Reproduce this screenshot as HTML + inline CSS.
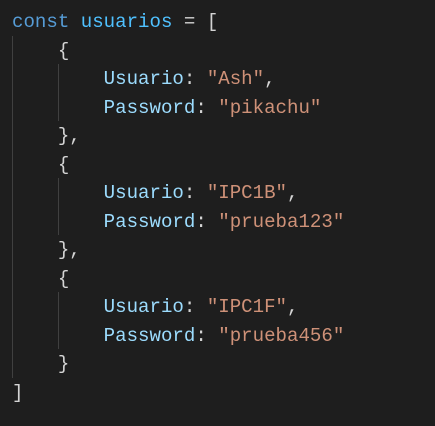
<!DOCTYPE html>
<html><head><meta charset="utf-8"><style>
html,body{margin:0;padding:0;background:#1e1e1e;width:435px;height:426px;overflow:hidden}
pre{position:absolute;left:12px;top:8px;margin:0;font-family:"Liberation Mono",monospace;font-size:19.1px;line-height:28.5px;color:#d4d4d4}
.k{color:#569cd6}.v{color:#4fc1ff}.p{color:#9cdcfe}.s{color:#ce9178}
.g{position:absolute;width:1px;background:#404040}
</style></head><body>
<div class="g" style="left:12px;top:36px;height:342px"></div>
<div class="g" style="left:58px;top:64px;height:57px"></div>
<div class="g" style="left:58px;top:178px;height:57px"></div>
<div class="g" style="left:58px;top:292px;height:57px"></div>
<pre><span class="k">const</span> <span class="v">usuarios</span> = [
    {
        <span class="p">Usuario</span>: <span class="s">"Ash"</span>,
        <span class="p">Password</span>: <span class="s">"pikachu"</span>
    },
    {
        <span class="p">Usuario</span>: <span class="s">"IPC1B"</span>,
        <span class="p">Password</span>: <span class="s">"prueba123"</span>
    },
    {
        <span class="p">Usuario</span>: <span class="s">"IPC1F"</span>,
        <span class="p">Password</span>: <span class="s">"prueba456"</span>
    }
]</pre>
</body></html>
